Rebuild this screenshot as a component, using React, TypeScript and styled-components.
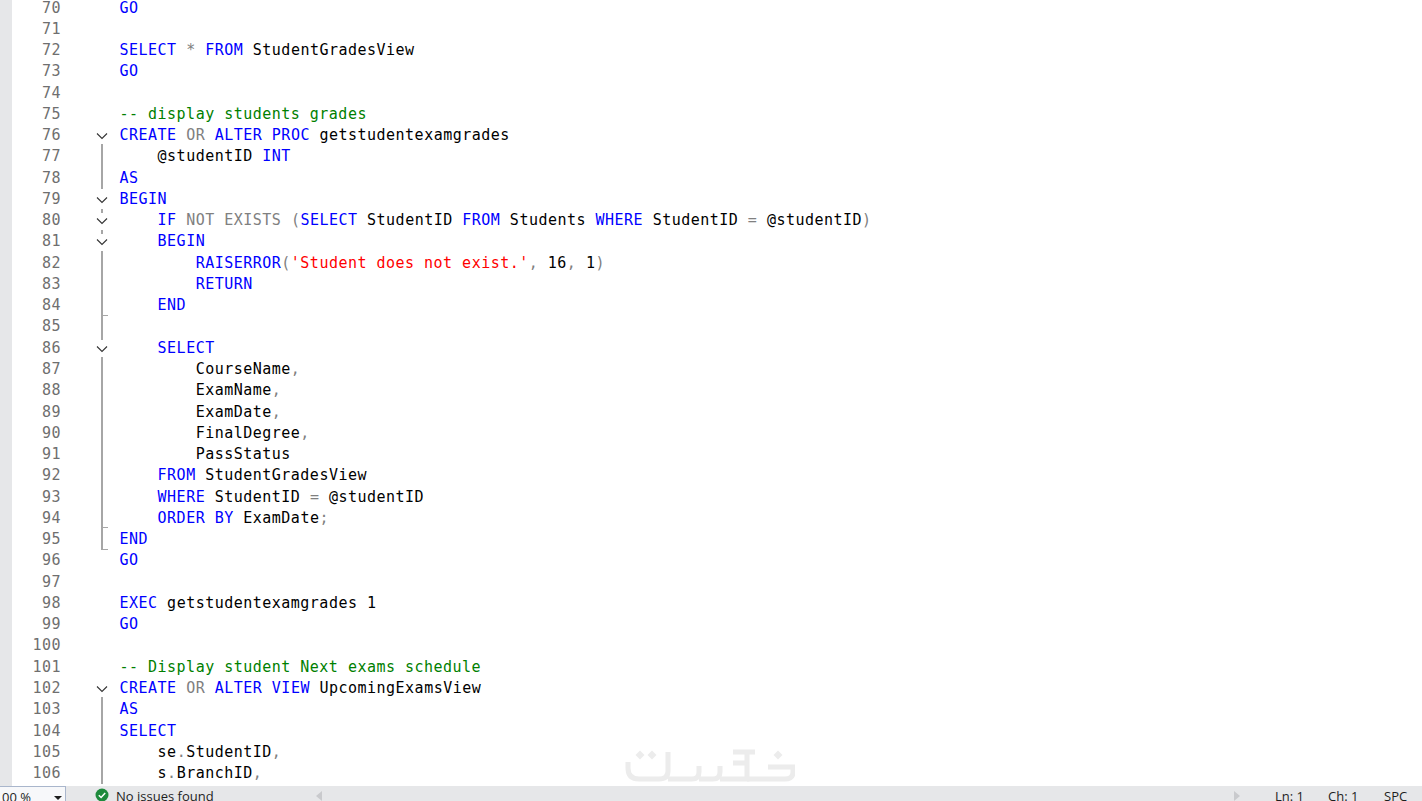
import React from 'react'
import styled, { createGlobalStyle } from 'styled-components'

const GlobalStyle = createGlobalStyle`
	html, body {
		margin: 0;
		padding: 0;
		height: 100%;
		overflow: hidden;
		background: #ffffff;
	}
`

type Fold = 'none' | 'open' | 'openDash' | 'line' | 'tick' | 'end'

const source: [string, Fold?][] = [
	['GO'],
	[''],
	['SELECT * FROM StudentGradesView'],
	['GO'],
	[''],
	['-- display students grades'],
	['CREATE OR ALTER PROC getstudentexamgrades', 'open'],
	['    @studentID INT', 'line'],
	['AS', 'line'],
	['BEGIN', 'open'],
	['    IF NOT EXISTS (SELECT StudentID FROM Students WHERE StudentID = @studentID)', 'openDash'],
	['    BEGIN', 'openDash'],
	["        RAISERROR('Student does not exist.', 16, 1)", 'line'],
	['        RETURN', 'line'],
	['    END', 'line'],
	['', 'tick'],
	['    SELECT', 'open'],
	['        CourseName,', 'line'],
	['        ExamName,', 'line'],
	['        ExamDate,', 'line'],
	['        FinalDegree,', 'line'],
	['        PassStatus', 'line'],
	['    FROM StudentGradesView', 'line'],
	['    WHERE StudentID = @studentID', 'line'],
	['    ORDER BY ExamDate;', 'line'],
	['END', 'end'],
	['GO'],
	[''],
	['EXEC getstudentexamgrades 1'],
	['GO'],
	[''],
	['-- Display student Next exams schedule'],
	['CREATE OR ALTER VIEW UpcomingExamsView', 'open'],
	['AS', 'line'],
	['SELECT', 'line'],
	['    se.StudentID,', 'line'],
	['    s.BranchID,', 'line'],
]

const KEYWORDS = /^(SELECT|FROM|GO|CREATE|ALTER|PROC|VIEW|INT|AS|BEGIN|IF|WHERE|RAISERROR|RETURN|END|ORDER|BY|EXEC)$/
const OPERATORS = /^(OR|NOT|EXISTS|[*,().=;])$/

const renderCode = (code: string) => {
	if (code.startsWith('--')) return <Comment>{code}</Comment>
	return code.split(/('[^']*'|[A-Za-z@]+|[*,().=;])/).map((part, i) => {
		if (part.startsWith("'")) return <Str key={i}>{part}</Str>
		if (KEYWORDS.test(part)) return <Keyword key={i}>{part}</Keyword>
		if (OPERATORS.test(part)) return <Operator key={i}>{part}</Operator>
		return part
	})
}

export default function App() {
	return (
		<Page>
			<GlobalStyle />
			<Editor>
				<Strip />
				<Lines>
					{source.map(([code, fold], i) => (
						<Row key={i}>
							<LineNumber>{70 + i}</LineNumber>
							<FoldCell $kind={fold ?? 'none'}>
								{(fold === 'open' || fold === 'openDash') && (
									<Chevron viewBox="0 0 12 8">
										<path d="M1 1.5 L6 6.5 L11 1.5" fill="none" stroke="#333" strokeWidth="1.1" />
									</Chevron>
								)}
							</FoldCell>
							<Code>{renderCode(code)}</Code>
						</Row>
					))}
				</Lines>
				<Watermark viewBox="0 0 170 37" aria-hidden="true">
					<g fill="none" stroke="#ececec" strokeWidth="5">
						<path d="M3 14 V20 Q3 31 14 31 H34 Q43 31 43 23 V4" />
						<path d="M43 31 H67 Q74 31 74 24 V18 M74 31 H88 Q95 31 95 24 V18" />
						<path d="M95 31 H122 V4 H130 M108 4 H122 M108 15 H122" />
						<path d="M122 31 H160 Q168 31 168 24 V19 H143" />
					</g>
					<g fill="#ececec">
						<path d="M15 2.5 L19.5 7 L15 11.5 L10.5 7 Z" />
						<path d="M27 2.5 L31.5 7 L27 11.5 L22.5 7 Z" />
						<path d="M153 2.5 L157.5 7 L153 11.5 L148.5 7 Z" />
					</g>
				</Watermark>
			</Editor>
			<StatusBar>
				<ZoomBox>
					<ZoomValue>00 %</ZoomValue>
					<ZoomArrow />
				</ZoomBox>
				<IssueIcon viewBox="0 0 14 14">
					<circle cx="7" cy="7" r="6.5" fill="#1e8a3c" />
					<path d="M3.8 7.2 L6.1 9.5 L10.2 4.9" fill="none" stroke="#fff" strokeWidth="1.5" />
				</IssueIcon>
				<IssueText>No issues found</IssueText>
				<ScrollTrack>
					<ScrollArrow viewBox="0 0 6 10">
						<path d="M6 0 V10 L0 5 Z" fill="#c9cacd" />
					</ScrollArrow>
					<ScrollArrow viewBox="0 0 6 10">
						<path d="M0 0 V10 L6 5 Z" fill="#c9cacd" />
					</ScrollArrow>
				</ScrollTrack>
				<Caret $width={53}>Ln: 1</Caret>
				<Caret $width={56}>Ch: 1</Caret>
				<Caret $width={38}>SPC</Caret>
			</StatusBar>
		</Page>
	)
}

const Page = styled.div`
	display: flex;
	flex-direction: column;

	width: 1422px;
	height: 801px;

	overflow: hidden;

	background: #ffffff;
`

const Editor = styled.div`
	position: relative;

	display: flex;

	height: 786px;

	overflow: hidden;
`

const Strip = styled.div`
	flex: 0 0 12px;

	background: #e6e7e9;
`

const Lines = styled.div`
	flex: 1;

	margin-top: -2.5px;
`

const Row = styled.div`
	display: flex;

	height: 21.28px;

	font-family: "DejaVu Sans Mono", monospace;
	font-size: 15px;
	line-height: 21.28px;
	letter-spacing: 0.485px;
	color: #000000;
	white-space: pre;
`

const LineNumber = styled.div`
	width: 49px;

	color: #6f6f6f;
	text-align: right;
`

const foldStyles: Record<Fold, string> = {
	none: `
		&::before, &::after { display: none; }
	`,
	open: `
		&::before, &::after { display: none; }
	`,
	openDash: `
		&::before {
			top: -1px;
			height: 4px;
		}
		&::after { display: none; }
	`,
	line: `
		&::before {
			top: -2px;
			bottom: 0;
		}
		&::after { display: none; }
	`,
	tick: `
		&::before {
			top: -2px;
			bottom: -2px;
		}
		&::after {
			top: -1px;
			width: 5px;
			height: 1px;
		}
	`,
	end: `
		&::before {
			top: -2px;
			bottom: 0;
		}
		&::after {
			top: -2px;
			width: 5px;
			height: 1px;
			box-shadow: 0 22px 0 #a6a6a6;
		}
	`,
}

const FoldCell = styled.div<{ $kind: Fold }>`
	position: relative;

	flex: 0 0 58.5px;

	&::before,
	&::after {
		content: '';
		position: absolute;
		background: #a6a6a6;
	}

	&::before {
		left: 40px;
		width: 2px;
	}

	&::after {
		left: 42px;
	}

	${(p) => foldStyles[p.$kind]}
`

const Chevron = styled.svg`
	position: absolute;
	top: 7px;
	left: 35px;

	width: 12px;
	height: 8px;
`

const Code = styled.div`
	flex: 1;
`

const Keyword = styled.span`
	color: #0000ff;
`

const Operator = styled.span`
	color: #808080;
`

const Comment = styled.span`
	color: #008000;
`

const Str = styled.span`
	color: #ff0000;
`

const Watermark = styled.svg`
	position: absolute;
	left: 625px;
	bottom: 1px;

	width: 170px;
	height: 37px;
`

const StatusBar = styled.div`
	display: flex;
	align-items: flex-start;

	height: 15px;

	overflow: hidden;

	background: #e6e7e9;

	font-family: "Open Sans", sans-serif;
	font-size: 13px;
	line-height: 18px;
	color: #1e1e1e;
`

const ZoomBox = styled.div`
	display: flex;
	justify-content: space-between;

	flex: 0 0 66px;
	height: 20px;

	padding: 1px 3px 0 2px;
	box-sizing: border-box;

	background: #f7f8fa;
	border-top: 1px solid #a9b6cc;
	border-right: 1px solid #a9b6cc;
`

const ZoomValue = styled.span``

const ZoomArrow = styled.span`
	width: 0;
	height: 0;

	margin-top: 8px;

	border-left: 4px solid transparent;
	border-right: 4px solid transparent;
	border-top: 4px solid #1e1e1e;
`

const IssueIcon = styled.svg`
	flex: 0 0 14px;

	height: 14px;

	margin: 2px 0 0 29px;
`

const IssueText = styled.span`
	flex: 0 0 200px;

	margin: 1px 0 0 7px;
`

const ScrollTrack = styled.div`
	display: flex;
	justify-content: space-between;

	flex: 0 0 924px;

	margin: 5px 35px 0 0;
`

const ScrollArrow = styled.svg`
	width: 6px;
	height: 10px;
`

const Caret = styled.span<{ $width: number }>`
	flex: 0 0 ${(p) => p.$width}px;

	margin-top: 1px;
`
